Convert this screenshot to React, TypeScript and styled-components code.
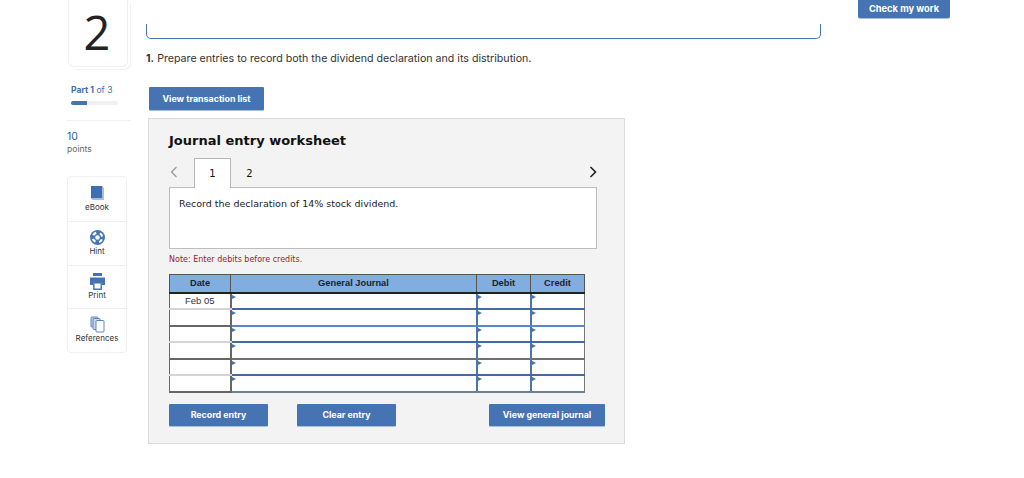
import * as React from "react";
import styled, { createGlobalStyle } from "styled-components";

const blue = "#4674b2";

const GlobalStyle = createGlobalStyle`
  html, body {
    margin: 0;
    padding: 0;
    background: #fff;
    overflow: hidden;
  }
`;

const Page = styled.div`
  display: grid;
  grid-template-columns: 64px 675px 92px;
  column-gap: 15px;
  width: 1024px;
  height: 478px;
  padding-left: 67px;
  box-sizing: border-box;
  font-family: "Inter", "Liberation Sans", sans-serif;
  overflow: hidden;
`;

const Rail = styled.aside`
  display: flex;
  flex-direction: column;
`;

const NumberCard = styled.div`
  box-sizing: border-box;
  width: 60px;
  height: 67px;
  margin-left: 1px;
  display: flex;
  align-items: center;
  justify-content: center;
  padding: 0 2px 1px 0;
  border: 1px solid #efefef;
  border-top: 0;
  border-radius: 0 0 6px 6px;
  box-shadow: 2px 2px 0 #fff, 3px 3px 0 #f2f2f2;
  font-family: "Open Sans", sans-serif;
  font-size: 47px;
  line-height: 1.2;
  color: #222;
`;

const PartLabel = styled.div`
  margin: 18px 0 0 4px;
  font-size: 8.6px;
  line-height: 11px;
  color: #3f6fb0;
  font-weight: 400;

  b {
    font-weight: 700;
  }
`;

const Progress = styled.div`
  width: 47px;
  height: 4px;
  margin: 5px 0 0 4px;
  border-radius: 2px;
  background: #f1f1f1;
  overflow: hidden;

  &::before {
    content: "";
    display: block;
    width: 16px;
    height: 100%;
    background: ${blue};
  }
`;

const Divider = styled.div`
  width: 64px;
  height: 1px;
  margin-top: 15px;
  background: #f0f0f0;
`;

const Points = styled.div`
  margin-top: 9px;
  font-size: 8.6px;
  line-height: 13px;
  color: #666;

  strong {
    display: block;
    font-size: 10.5px;
    font-weight: 400;
    color: #2d5c9c;
  }
`;

const Tools = styled.nav`
  box-sizing: border-box;
  width: 60px;
  height: 177px;
  margin-top: 20px;
  border: 1px solid #efefef;
  border-radius: 4px;
  display: grid;
  grid-auto-rows: 1fr;
`;

const Tool = styled.div`
  display: flex;
  flex-direction: column;
  align-items: center;
  justify-content: flex-start;
  padding-top: 7px;
  font-size: 8px;
  line-height: 10px;
  color: #333;

  &:first-child {
    padding-top: 8px;
  }

  & + & {
    border-top: 1px solid #efefef;
  }

  svg {
    display: block;
    width: 17px;
    height: 17px;
  }
`;

const Main = styled.main`
  display: flex;
  flex-direction: column;
  align-items: flex-start;
`;

const TopBox = styled.div`
  box-sizing: border-box;
  width: 675px;
  height: 15px;
  margin-top: 24px;
  border: 1px solid ${blue};
  border-top: 0;
  border-radius: 0 0 5px 5px;
`;

const Question = styled.p`
  margin: 13px 0 0;
  font-size: 10.65px;
  line-height: 14px;
  color: #333;

  b {
    font-weight: 700;
  }
`;

const Button = styled.button<{ $width: number }>`
  width: ${(p) => p.$width}px;
  height: 22px;
  padding: 0;
  border: 0;
  border-radius: 1px;
  background: ${blue};
  color: #fff;
  font-family: "Inter", "Liberation Sans", sans-serif;
  font-size: 8.85px;
  font-weight: 700;
  box-shadow: 0 1px 0 #a9bedb;
`;

const ListButton = styled(Button)`
  height: 23px;
  margin: 21px 0 0 3px;
`;

const Worksheet = styled.section`
  box-sizing: border-box;
  width: 477px;
  height: 326px;
  margin: 8px 0 0 2px;
  padding: 13px 20px 0;
  background: #f3f3f3;
  border: 1px solid #dcdcdc;
  font-family: "DejaVu Sans", sans-serif;
`;

const Title = styled.h2`
  margin: 0;
  font-size: 13px;
  line-height: 17px;
  font-weight: 700;
  color: #111;
`;

const TabRow = styled.div`
  display: flex;
  align-items: stretch;
  width: 428px;
  height: 30px;
  margin-top: 9px;
  margin-bottom: -1px;
  position: relative;
  z-index: 1;
`;

const Arrow = styled.div`
  width: 25px;
  display: flex;
  align-items: center;
  padding-left: 1px;
  box-sizing: border-box;
  padding-bottom: 3px;

  svg {
    display: block;
  }
`;

const Tab = styled.div<{ $active?: boolean }>`
  box-sizing: border-box;
  width: 37px;
  display: flex;
  align-items: center;
  justify-content: center;
  font-size: 10px;
  color: #111;
  background: ${(p) => (p.$active ? "#fff" : "transparent")};
  border: 1px solid ${(p) => (p.$active ? "#b5b5b5" : "transparent")};
  border-bottom: 0;
`;

const NextArrow = styled.div`
  margin-left: auto;
  display: flex;
  align-items: center;
  padding-bottom: 3px;
`;

const Prompt = styled.div`
  box-sizing: border-box;
  width: 428px;
  height: 62px;
  padding: 9px 9px;
  background: #fff;
  border: 1px solid #bdbdbd;
  font-size: 9.5px;
  line-height: 14px;
  color: #222;
`;

const Note = styled.div`
  margin-top: 4px;
  padding-top: 1px;
  font-size: 8px;
  line-height: 11px;
  color: #a32020;
`;

const Table = styled.table`
  width: 415px;
  margin-top: 9px;
  border-collapse: collapse;
  table-layout: fixed;
  font-family: "Liberation Sans", sans-serif;
`;

const Head = styled.th`
  box-sizing: border-box;
  height: 18px;
  padding: 0;
  background: #82ade0;
  border: 1px solid #555;
  border-bottom: 2px solid #222;
  font-size: 9.3px;
  font-weight: 700;
  color: #222;
  text-align: center;
`;

const DateCell = styled.td<{ $line: string }>`
  box-sizing: border-box;
  height: 16.5px;
  padding: 0;
  background: #fff;
  border-left: 1px solid #666;
  border-right: 2px solid #666;
  border-bottom: 2px solid ${(p) => p.$line};
  font-size: 9.5px;
  color: #333;
  text-align: center;
`;

const EntryCell = styled.td<{ $line: string }>`
  box-sizing: border-box;
  height: 16.5px;
  padding: 0;
  position: relative;
  background: #fff;
  border-left: 2px solid #4d74a8;
  border-right: 1px solid #777;
  border-bottom: 2px solid ${(p) => p.$line};

  &::before {
    content: "";
    position: absolute;
    left: 0;
    top: 1px;
    border-left: 4px solid ${blue};
    border-top: 2px solid transparent;
    border-bottom: 2px solid transparent;
  }
`;

const Actions = styled.div`
  display: flex;
  align-items: center;
  width: 436px;
  margin-top: 11px;
`;

const ClearButton = styled(Button)`
  margin-left: 29px;
`;

const JournalButton = styled(Button)`
  margin-left: auto;
`;

const Side = styled.div`
  display: flex;
  align-items: flex-start;
  padding-left: 22px;
`;

const CheckButton = styled.button`
  flex: none;
  width: 92px;
  height: 18px;
  padding: 0 0 2px;
  border: 0;
  border-radius: 0 0 2px 2px;
  background: ${blue};
  color: #fff;
  font-family: "Inter", "Liberation Sans", sans-serif;
  font-size: 9.3px;
  font-weight: 700;
  box-shadow: 0 1px 0 #a9bedb;
`;

const BookIcon = () => (
  <svg viewBox="0 0 17 17">
    <path d="M2 1h11.500v12.500H2z" fill="#3f6fb3" />
    <path d="M13.500 2.500H15V15H3.500l-1.500-1.500h11.500z" fill="#a9bfdd" />
  </svg>
);

const HintIcon = () => (
  <svg viewBox="0 0 17 17">
    <circle cx="8.500" cy="8.500" r="7.500" fill="#4674b2" />
    <circle
      cx="8.500"
      cy="8.500"
      r="4.800"
      fill="none"
      stroke="#fff"
      strokeWidth="2.200"
      strokeDasharray="3.700 3.840"
      strokeDashoffset="5.600"
    />
    <circle cx="8.500" cy="8.500" r="2.200" fill="#fff" />
  </svg>
);

const PrintIcon = () => (
  <svg viewBox="0 0 17 17">
    <path d="M4 0h9v3H4z" fill="#4674b2" />
    <path d="M1 4.500h15V12h-3V9H4v3H1z" fill="#4674b2" />
    <path d="M4.800 9.800h7.400v6.400H4.800z" fill="#fff" stroke="#4674b2" strokeWidth="1.400" />
  </svg>
);

const ReferencesIcon = () => (
  <svg viewBox="0 0 17 17" fill="#fff" stroke="#5c86bd" strokeWidth="1">
    <rect x="2" y="1" width="7" height="10" rx="1" fill="#c9d7ea" />
    <rect x="4" y="2.500" width="7" height="11" rx="1" fill="#c9d7ea" />
    <rect x="7" y="4.500" width="8" height="11.500" rx="1" />
  </svg>
);

const rows = ["Feb 05", "", "", "", "", ""];
const dateLines = ["#d4d4d4", "#666", "#d4d4d4", "#666", "#d4d4d4", "#666"];
const entryLines = ["#436a9f", "#5b88c4", "#436a9f", "#707070", "#436a9f", "#6f7f9a"];

const App: React.FC = () => {
  return (
    <Page>
      <GlobalStyle />
      <Rail>
        <NumberCard>2</NumberCard>
        <PartLabel>
          <b>Part 1</b> of 3
        </PartLabel>
        <Progress />
        <Divider />
        <Points>
          <strong>10</strong>
          points
        </Points>
        <Tools>
          <Tool>
            <BookIcon />
            eBook
          </Tool>
          <Tool>
            <HintIcon />
            Hint
          </Tool>
          <Tool>
            <PrintIcon />
            Print
          </Tool>
          <Tool>
            <ReferencesIcon />
            References
          </Tool>
        </Tools>
      </Rail>
      <Main>
        <TopBox />
        <Question>
          <b>1.</b> Prepare entries to record both the dividend declaration and its distribution.
        </Question>
        <ListButton $width={115}>View transaction list</ListButton>
        <Worksheet>
          <Title>Journal entry worksheet</Title>
          <TabRow>
            <Arrow>
              <svg width="8" height="12" viewBox="0 0 8 12">
                <path d="M6.500 1L1.500 6l5 5" fill="none" stroke="#999" strokeWidth="1.300" />
              </svg>
            </Arrow>
            <Tab $active>1</Tab>
            <Tab>2</Tab>
            <NextArrow>
              <svg width="8" height="12" viewBox="0 0 8 12">
                <path d="M1.500 1l5 5-5 5" fill="none" stroke="#222" strokeWidth="1.600" />
              </svg>
            </NextArrow>
          </TabRow>
          <Prompt>Record the declaration of 14% stock dividend.</Prompt>
          <Note>Note: Enter debits before credits.</Note>
          <Table>
            <colgroup>
              <col style={{ width: 61 }} />
              <col style={{ width: 246 }} />
              <col style={{ width: 54 }} />
              <col style={{ width: 54 }} />
            </colgroup>
            <thead>
              <tr>
                <Head>Date</Head>
                <Head>General Journal</Head>
                <Head>Debit</Head>
                <Head>Credit</Head>
              </tr>
            </thead>
            <tbody>
              {rows.map((date, i) => (
                <tr key={i}>
                  <DateCell $line={dateLines[i]}>{date}</DateCell>
                  <EntryCell $line={entryLines[i]} />
                  <EntryCell $line={entryLines[i]} />
                  <EntryCell $line={entryLines[i]} />
                </tr>
              ))}
            </tbody>
          </Table>
          <Actions>
            <Button $width={99}>Record entry</Button>
            <ClearButton $width={99}>Clear entry</ClearButton>
            <JournalButton $width={116}>View general journal</JournalButton>
          </Actions>
        </Worksheet>
      </Main>
      <Side>
        <CheckButton>Check my work</CheckButton>
      </Side>
    </Page>
  );
};

export default App;
